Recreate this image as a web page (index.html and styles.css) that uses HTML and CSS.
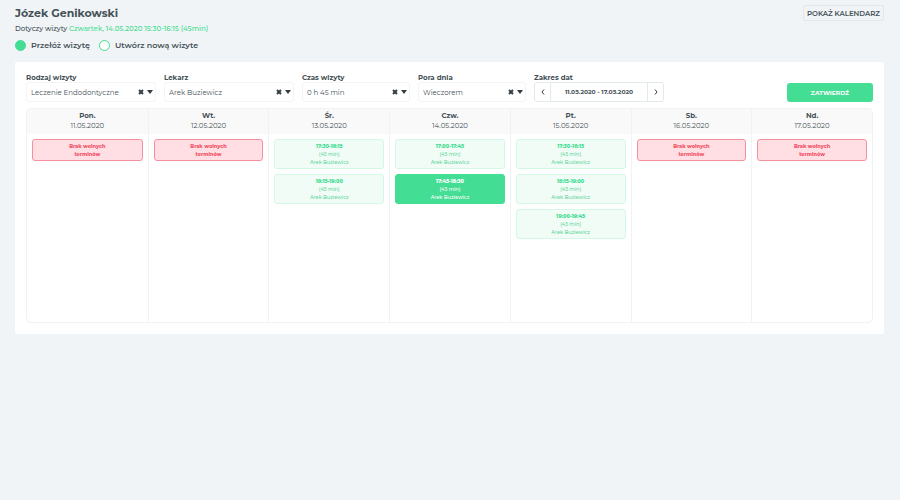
FILE: index.html
```html
<!DOCTYPE html>
<html lang="pl">
<head>
  <meta charset="utf-8">
  <meta name="viewport" content="width=device-width, initial-scale=1">
  <title>Józek Genikowski - wizyta</title>
  <link rel="stylesheet" href="styles.css">
</head>
<body>
  <header class="page-header">
    <div class="patient">
      <h1>Józek Genikowski</h1>
      <p class="visit-info">Dotyczy wizyty <span class="visit-date">Czwartek, 14.05.2020 15:30-16:15 (45min)</span></p>
      <div class="mode">
        <label><input type="radio" name="mode" checked>Przełóż wizytę</label>
        <label><input type="radio" name="mode">Utwórz nową wizyte</label>
      </div>
    </div>
    <button type="button" class="show-calendar">POKAŻ KALENDARZ</button>
  </header>

  <main class="card">
    <form class="filters">
      <div class="field field-wide">
        <label for="type">Rodzaj wizyty</label>
        <div class="select-box">
          <select id="type"><option>Leczenie Endodontyczne</option></select>
          <button type="button" class="clear" aria-label="Wyczyść rodzaj wizyty"><svg viewBox="0 0 6 6"><path d="M1 1l4 4M5 1l-4 4"/></svg></button>
          <svg class="caret" viewBox="0 0 6 4"><path d="M0 0h6L3 4z"/></svg>
        </div>
      </div>
      <div class="field field-wide">
        <label for="doctor">Lekarz</label>
        <div class="select-box">
          <select id="doctor"><option>Arek Buziewicz</option></select>
          <button type="button" class="clear" aria-label="Wyczyść lekarza"><svg viewBox="0 0 6 6"><path d="M1 1l4 4M5 1l-4 4"/></svg></button>
          <svg class="caret" viewBox="0 0 6 4"><path d="M0 0h6L3 4z"/></svg>
        </div>
      </div>
      <div class="field">
        <label for="duration">Czas wizyty</label>
        <div class="select-box">
          <select id="duration"><option>0 h 45 min</option></select>
          <button type="button" class="clear" aria-label="Wyczyść czas wizyty"><svg viewBox="0 0 6 6"><path d="M1 1l4 4M5 1l-4 4"/></svg></button>
          <svg class="caret" viewBox="0 0 6 4"><path d="M0 0h6L3 4z"/></svg>
        </div>
      </div>
      <div class="field">
        <label for="daytime">Pora dnia</label>
        <div class="select-box">
          <select id="daytime"><option>Wieczorem</option></select>
          <button type="button" class="clear" aria-label="Wyczyść porę dnia"><svg viewBox="0 0 6 6"><path d="M1 1l4 4M5 1l-4 4"/></svg></button>
          <svg class="caret" viewBox="0 0 6 4"><path d="M0 0h6L3 4z"/></svg>
        </div>
      </div>
      <div class="field field-wide">
        <label for="range">Zakres dat</label>
        <div class="range-box">
          <button type="button" aria-label="Poprzedni tydzień"><svg viewBox="0 0 4 6"><path d="M3 0.5L1 3l2 2.5"/></svg></button>
          <input id="range" type="text" value="11.05.2020 - 17.05.2020">
          <button type="button" aria-label="Następny tydzień"><svg viewBox="0 0 4 6"><path d="M1 0.5L3 3L1 5.5"/></svg></button>
        </div>
      </div>
      <button type="submit" class="confirm">ZATWIERDŹ</button>
    </form>

    <table class="week">
      <thead>
        <tr>
          <th>Pon.<span>11.05.2020</span></th>
          <th>Wt.<span>12.05.2020</span></th>
          <th>Śr.<span>13.05.2020</span></th>
          <th>Czw.<span>14.05.2020</span></th>
          <th>Pt.<span>15.05.2020</span></th>
          <th>Sb.<span>16.05.2020</span></th>
          <th>Nd.<span>17.05.2020</span></th>
        </tr>
      </thead>
      <tbody>
        <tr>
          <td><p class="empty">Brak wolnych<br>terminów</p></td>
          <td><p class="empty">Brak wolnych<br>terminów</p></td>
          <td>
            <button type="button" class="slot"><b>17:30-18:15</b><span>(45 min)</span><span>Arek Buziewicz</span></button>
            <button type="button" class="slot"><b>18:15-19:00</b><span>(45 min)</span><span>Arek Buziewicz</span></button>
          </td>
          <td>
            <button type="button" class="slot"><b>17:00-17:45</b><span>(45 min)</span><span>Arek Buziewicz</span></button>
            <button type="button" class="slot selected"><b>17:45-18:30</b><span>(45 min)</span><span>Arek Buziewicz</span></button>
          </td>
          <td>
            <button type="button" class="slot"><b>17:30-18:15</b><span>(45 min)</span><span>Arek Buziewicz</span></button>
            <button type="button" class="slot"><b>18:15-19:00</b><span>(45 min)</span><span>Arek Buziewicz</span></button>
            <button type="button" class="slot"><b>19:00-19:45</b><span>(45 min)</span><span>Arek Buziewicz</span></button>
          </td>
          <td><p class="empty">Brak wolnych<br>terminów</p></td>
          <td><p class="empty">Brak wolnych<br>terminów</p></td>
        </tr>
      </tbody>
    </table>
  </main>
</body>
</html>
```
FILE: styles.css
```css
* {
  box-sizing: border-box;
}

body {
  margin: 0;
  padding: 5px 16px 16px 15px;
  background-color: #f0f4f6;
  color: #455157;
  font-family: Montserrat, Inter, sans-serif;
  font-size: 7px;
}

button, input, select {
  font-family: inherit;
  color: inherit;
  margin: 0;
}

button {
  cursor: pointer;
}

.page-header {
  display: flex;
  justify-content: space-between;
  align-items: flex-start;
  margin-bottom: 11px;
}

h1 {
  margin: 0;
  font-size: 11px;
  line-height: 16px;
  font-weight: 700;
}

.visit-info {
  margin: 4px 0 6px;
  font-size: 7px;
  line-height: 8px;
  font-weight: 500;
}

.visit-date {
  color: #43dd93;
}

.mode {
  display: flex;
  gap: 9px;
}

.mode label {
  display: flex;
  align-items: center;
  gap: 5px;
  font-size: 8px;
  line-height: 12px;
  font-weight: 600;
}

.mode input {
  appearance: none;
  width: 11px;
  height: 11px;
  border: 1px solid #43dd93;
  border-radius: 50%;
  background-color: #fff;
}

.mode input:checked {
  background-color: #43dd93;
}

.show-calendar {
  height: 16px;
  padding: 0 3px;
  border: 1px solid #dfe8ea;
  border-radius: 2px;
  background: none;
  font-size: 7px;
  font-weight: 600;
}

.card {
  padding: 11px;
  background-color: #fff;
  border-radius: 2px;
}

.filters {
  display: flex;
  align-items: flex-end;
  gap: 8px;
  margin-bottom: 6px;
}

.field {
  flex: 0 1 108px;
  min-width: 0;
}

.field-wide {
  flex-basis: 130px;
}

.field label {
  display: block;
  font-size: 7px;
  line-height: 9px;
  font-weight: 700;
}

.select-box, .range-box {
  display: flex;
  align-items: center;
  height: 20px;
  border: 1px solid #f1f4f5;
  border-radius: 3px;
}

.select-box {
  padding: 0 2px 0 4px;
}

.select-box select {
  appearance: none;
  flex: 1;
  min-width: 0;
  padding: 0;
  border: none;
  background: none;
  font-size: 7px;
}

.clear {
  display: flex;
  padding: 0;
  border: none;
  background: none;
}

.clear svg {
  width: 6px;
  height: 6px;
  fill: none;
  stroke: #333d42;
  stroke-width: 2;
}

.caret {
  width: 6px;
  height: 4px;
  margin-left: 3px;
  fill: #333d42;
}

.range-box {
  border-color: #e3eaec;
}

.range-box button {
  display: flex;
  align-items: center;
  justify-content: center;
  flex: 0 0 15px;
  height: 100%;
  padding: 0;
  border: none;
  background: none;
}

.range-box svg {
  width: 4px;
  height: 6px;
  fill: none;
  stroke: #333d42;
}

.range-box input {
  flex: 1;
  min-width: 0;
  height: 100%;
  padding: 0;
  border: solid #e3eaec;
  border-width: 0 1px;
  background: none;
  font-size: 6px;
  font-weight: 700;
  text-align: center;
}

.confirm {
  width: 86px;
  height: 19px;
  margin-left: auto;
  border: none;
  border-radius: 3px;
  background-color: #43dd93;
  color: #fff;
  font-size: 6px;
  font-weight: 700;
}

.week {
  width: 100%;
  table-layout: fixed;
  border: 1px solid #eff3f4;
  border-radius: 5px;
  border-spacing: 0;
  overflow: hidden;
}

.week th {
  padding: 2px 0 3px;
  background-color: #f9f9f9;
  font-size: 7px;
  line-height: 10px;
  font-weight: 700;
}

.week th span {
  display: block;
  font-weight: 400;
}

.week th + th, .week td + td {
  border-left: 1px solid #eff3f4;
}

.week td {
  height: 188px;
  padding: 5px;
  vertical-align: top;
}

.empty, .slot {
  display: block;
  width: 100%;
  margin: 0 0 5px;
  padding: 2px 0;
  border: 1px solid #d5f7e6;
  border-radius: 3px;
  font-size: 5px;
  line-height: 8px;
  text-align: center;
}

.empty {
  border-color: #f6909f;
  background-color: #ffdfe4;
  color: #f2566b;
  font-weight: 800;
}

.slot {
  background-color: #f2fcf7;
  color: #5fd699;
  font-weight: 500;
}

.slot b {
  display: block;
  color: #43dd93;
  font-weight: 800;
}

.slot span {
  display: block;
}

.slot.selected, .slot.selected b {
  border-color: #43dd93;
  background-color: #43dd93;
  color: #fff;
}
```
